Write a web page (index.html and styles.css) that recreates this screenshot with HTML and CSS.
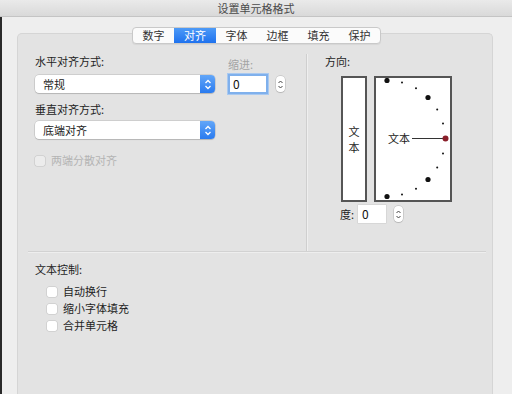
FILE: index.html
```html
<!DOCTYPE html>
<html lang="zh">
<head>
<meta charset="utf-8">
<title>设置单元格格式</title>
<link rel="stylesheet" href="styles.css">
</head>
<body>
<div class="window">
  <div class="titlebar">设置单元格格式</div>
  <div class="content">
    <div class="tabs">
      <span class="tab">数字</span>
      <span class="tab active">对齐</span>
      <span class="tab">字体</span>
      <span class="tab">边框</span>
      <span class="tab">填充</span>
      <span class="tab">保护</span>
    </div>
    <div class="panel">
      <div class="top">
        <div class="left">
          <div class="grid">
            <span class="label first">水平对齐方式:</span>
            <span class="label dim">缩进:</span>
            <div class="select"><span class="select-text">常规</span><span class="select-btn"><svg width="8" height="11" viewBox="0 0 8 11"><path d="M1.5 4 L4 1.5 L6.5 4 M1.5 7 L4 9.5 L6.5 7" fill="none" stroke="#fff" stroke-width="1.3"/></svg></span></div>
            <div class="indent">
              <div class="num focus">0</div>
              <span class="stepper"><svg width="7" height="13" viewBox="0 0 7 13"><path d="M1.5 5 L3.5 3 L5.5 5 M1.5 8 L3.5 10 L5.5 8" fill="none" stroke="#444" stroke-width="1"/></svg></span>
            </div>
            <span class="label row3">垂直对齐方式:</span>
            <span></span>
            <div class="select"><span class="select-text">底端对齐</span><span class="select-btn"><svg width="8" height="11" viewBox="0 0 8 11"><path d="M1.5 4 L4 1.5 L6.5 4 M1.5 7 L4 9.5 L6.5 7" fill="none" stroke="#fff" stroke-width="1.3"/></svg></span></div>
            <span></span>
          </div>
          <label class="check disabled"><span class="box"></span>两端分散对齐</label>
        </div>
        <div class="right">
          <span class="label">方向:</span>
          <div class="orient">
            <div class="vbox"><span>文</span><span>本</span></div>
            <div class="dial">
              <svg width="74" height="122" viewBox="0 0 74 122">
                <g fill="#111">
                  <circle cx="11" cy="2.5" r="2.6"/>
                  <circle cx="52" cy="19.5" r="2.6"/>
                  <circle cx="52" cy="101.5" r="2.6"/>
                  <circle cx="11" cy="118.5" r="2.6"/>
                  <circle cx="26" cy="4.5" r="1"/>
                  <circle cx="40" cy="10.3" r="1"/>
                  <circle cx="61.2" cy="31.5" r="1"/>
                  <circle cx="67" cy="45.5" r="1"/>
                  <circle cx="67" cy="75.5" r="1"/>
                  <circle cx="61.2" cy="89.5" r="1"/>
                  <circle cx="40" cy="110.7" r="1"/>
                  <circle cx="26" cy="116.5" r="1"/>
                </g>
                <line x1="36" y1="60.5" x2="68" y2="60.5" stroke="#333" stroke-width="1"/>
                <circle cx="69.5" cy="60.5" r="3" fill="#8a1f2a"/>
                <text x="12" y="65" font-size="11" fill="#222" font-family="Noto Sans CJK SC, sans-serif">文本</text>
              </svg>
            </div>
          </div>
          <div class="degree">
            <span class="label">度:</span>
            <div class="num small">0</div>
            <span class="stepper"><svg width="7" height="13" viewBox="0 0 7 13"><path d="M1.5 5 L3.5 3 L5.5 5 M1.5 8 L3.5 10 L5.5 8" fill="none" stroke="#444" stroke-width="1"/></svg></span>
          </div>
        </div>
      </div>
      <div class="sep"></div>
      <div class="bottom">
        <span class="label">文本控制:</span>
        <div class="checks">
          <label class="check"><span class="box"></span>自动换行</label>
          <label class="check"><span class="box"></span>缩小字体填充</label>
          <label class="check"><span class="box"></span>合并单元格</label>
        </div>
      </div>
    </div>
  </div>
</div>
</body>
</html>
```
FILE: styles.css
```css
* { box-sizing: border-box; }
html, body { margin: 0; padding: 0; }
body {
  width: 512px;
  height: 394px;
  overflow: hidden;
  background: #eeeeee;
  font-family: "Noto Sans CJK SC", sans-serif;
  font-size: 11px;
  color: #1e1e1e;
}
.window {
  width: 512px;
  height: 394px;
  display: flex;
  flex-direction: column;
  background: #eeeeee;
}
.titlebar {
  height: 17px;
  flex: none;
  line-height: 16px;
  text-align: center;
  font-size: 11px;
  color: #4a4a4a;
  background: linear-gradient(#eaeaea, #d9d9d9);
  border-bottom: 1px solid #c4c4c4;
}
.content {
  flex: 1;
  display: flex;
  flex-direction: column;
  align-items: center;
  padding: 10px 19px 0 15px;
  border-left: 2px solid #2a2a2a;
  min-height: 0;
}
.tabs {
  position: relative;
  z-index: 2;
  display: flex;
  height: 17px;
  margin-left: 3px;
  background: #fbfbfb;
  border: 1px solid #c9c9c9;
  border-radius: 4px;
  box-shadow: 0 1px 1px rgba(0,0,0,0.06);
}
.tab {
  width: 41px;
  line-height: 15px;
  text-align: center;
  color: #333;
  font-size: 11px;
}
.tab.active {
  width: 42px;
  color: #fff;
  background: linear-gradient(#4d9af7, #1f72ee);
}
.panel {
  align-self: stretch;
  flex: 1;
  margin-top: -11px;
  background: #e3e3e3;
  border: 1px solid #d5d5d5;
  border-bottom: none;
  border-radius: 5px 5px 0 0;
  display: flex;
  flex-direction: column;
}
.top {
  display: flex;
  height: 217px;
  padding: 20px 0 0 17px;
}
.left {
  width: 271px;
  display: flex;
  flex-direction: column;
}
.grid {
  display: grid;
  grid-template-columns: 180px auto;
  column-gap: 13px;
  align-items: center;
}
.label {
  line-height: 14px;
  height: 14px;
  color: #1e1e1e;
}
.label.dim { color: #a3a3a3; }
.label.first { margin-bottom: 6px; }
.row3 { margin-top: 8px; margin-bottom: 5px; }
.select {
  height: 18px;
  display: flex;
  background: #fff;
  border-radius: 4px;
  box-shadow: 0 0 0 0.5px rgba(0,0,0,0.18), 0 1px 1px rgba(0,0,0,0.12);
}
.select-text {
  flex: 1;
  padding-left: 8px;
  line-height: 18px;
  color: #222;
}
.select-btn {
  width: 15px;
  display: flex;
  align-items: center;
  justify-content: center;
  border-radius: 0 4px 4px 0;
  background: linear-gradient(#62a6f8, #2a7bef);
}
.indent {
  display: flex;
  align-items: center;
  gap: 8px;
}
.num {
  width: 40px;
  height: 20px;
  background: #fff;
  line-height: 18px;
  padding-left: 4px;
  font-size: 12px;
  color: #111;
  border: 1px solid #c9c9c9;
}
.num.focus {
  border: 2px solid #7fb0ec;
  box-shadow: 0 0 0 1px #a9c9f0;
  padding-left: 3px;
  line-height: 16px;
}
.num.small {
  width: 28px;
  height: 18px;
  border: none;
  line-height: 18px;
  padding-left: 4px;
  box-shadow: 0 0 0 0.5px rgba(0,0,0,0.1);
}
.stepper {
  width: 9px;
  height: 16px;
  display: flex;
  align-items: center;
  justify-content: center;
  background: #fff;
  border-radius: 4px;
  box-shadow: 0 0 0 0.5px rgba(0,0,0,0.2), 0 1px 1px rgba(0,0,0,0.1);
}
.check {
  display: flex;
  align-items: center;
  gap: 6px;
  height: 17px;
  line-height: 17px;
}
.left > .check { margin-top: 13px; }
.check.disabled { color: #b4b4b4; }
.box {
  width: 10px;
  height: 10px;
  background: #fff;
  border-radius: 2px;
  box-shadow: 0 0 0 0.5px rgba(0,0,0,0.15);
}
.check.disabled .box { background: #ececec; }
.right {
  width: 180px;
  border-left: 1px solid #cfcfcf;
  box-shadow: inset 1px 0 0 #efefef;
  padding-left: 18px;
  display: flex;
  flex-direction: column;
}
.orient {
  display: flex;
  gap: 7px;
  margin-top: 8px;
  margin-left: 16px;
}
.vbox {
  width: 26px;
  height: 126px;
  background: #fff;
  border: 2px solid #555;
  display: flex;
  flex-direction: column;
  align-items: center;
  justify-content: center;
  line-height: 16px;
  font-size: 11px;
}
.dial {
  width: 78px;
  height: 126px;
  background: #fff;
  border: 2px solid #555;
}
.dial svg { display: block; }
.degree {
  display: flex;
  align-items: center;
  gap: 4px;
  margin-top: 3px;
  margin-left: 15px;
  height: 18px;
}
.degree .stepper { margin-left: 4px; }
.sep {
  height: 2px;
  margin: 0 6px 0 10px;
  border-top: 1px solid #d2d2d2;
  border-bottom: 1px solid #eeeeee;
}
.bottom {
  padding: 9px 0 0 17px;
  display: flex;
  flex-direction: column;
}
.bottom > .label { line-height: 14px; }
.checks {
  margin-top: 7px;
  padding-left: 12px;
}
```
